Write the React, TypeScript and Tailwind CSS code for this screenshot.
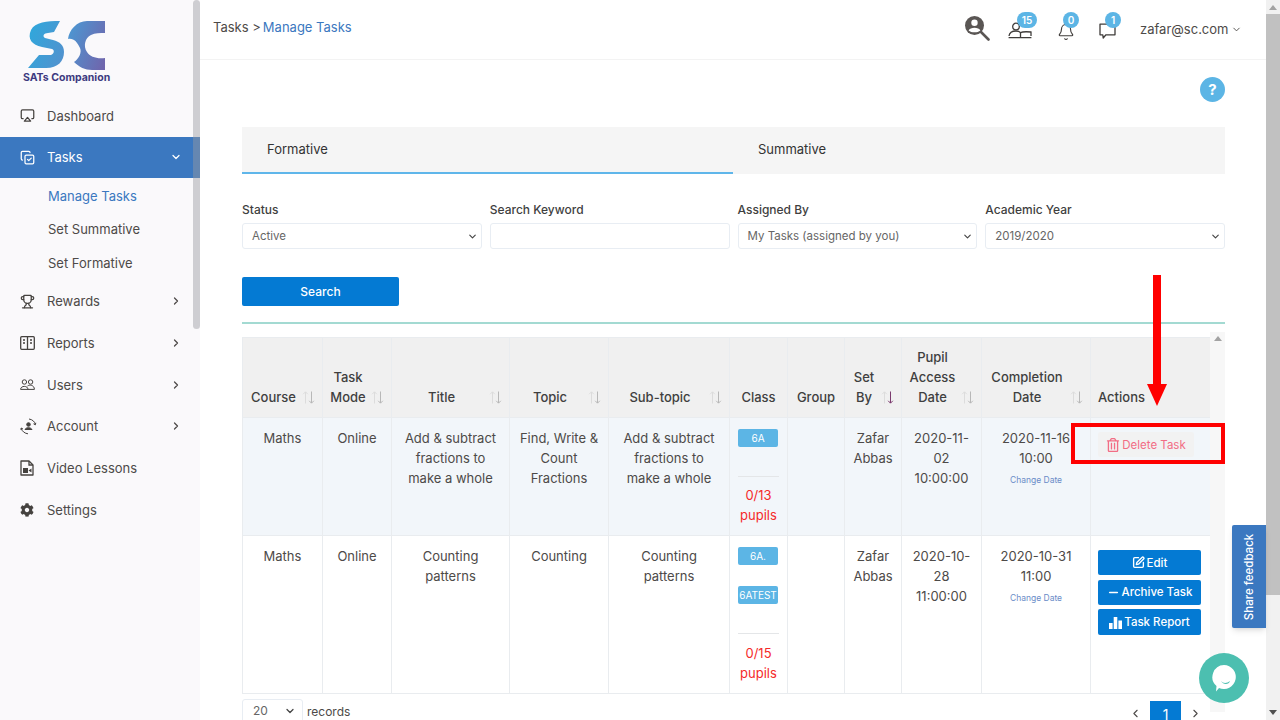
import React from 'react';
import { Airplay, Bell, ChevronDown, ChevronLeft, ChevronRight, CopyCheck, Minus, SquarePen, Trophy } from 'lucide-react';
import { FaCog, FaRegTrashAlt } from 'react-icons/fa';

const Logo = () => (
  <svg width="90" height="52" viewBox="0 0 90 52" className="block">
    <defs>
      <linearGradient id="sc" gradientUnits="userSpaceOnUse" x1="0" y1="10" x2="78" y2="40">
        <stop offset="0" stopColor="#2fa8dc" />
        <stop offset="0.5" stopColor="#4f93cf" />
        <stop offset="1" stopColor="#6f66ad" />
      </linearGradient>
    </defs>
    <path
      d="M33 0 C20 0 8 1 4 9 C0 18 5 24 15 26 L25 28 C28 29 27 33 24 34 L12 34 L1 47 L19 47 C31 47 37 40 37 31 C37 24 33 21 26 19 L18 17 C15 15 17 12 21 12 L27 11 Z"
      fill="url(#sc)"
    />
    <path
      d="M78 0 L60 0 C50 0 42 9 41 18 C47 17 50 21 53 27 C55 31 52 38 47 41 C52 46 58 49 65 49 L78 49 L78 37 C70 38 63 36 60 31 C56 25 58 17 64 14 C68 12 73 12 78 12 Z"
      fill="url(#sc)"
    />
  </svg>
);

const ReportIcon = () => (
  <svg width="15" height="14" viewBox="0 0 15 14" fill="none" stroke="#45423f" strokeWidth="1.3">
    <rect x="0.7" y="0.7" width="13.6" height="12.6" rx="1" />
    <path d="M7.5 1v12" />
    <path d="M3 4h2M3 7h2M10 4h2M10 7h2" strokeWidth="1.5" />
  </svg>
);

const UsersIcon = ({ w = 15, h = 11 }: { w?: number; h?: number }) => (
  <svg width={w} height={h} viewBox="0 0 15 11" fill="none" stroke="#45423f" strokeWidth="1">
    <circle cx="4.4" cy="3" r="2.2" />
    <circle cx="10.6" cy="3" r="2.2" />
    <path d="M0.6 10.4c0-4 7.4-4 7.4 0zM7.5 7c2-1.6 6.9-1 6.9 3.4H8" />
  </svg>
);

const AccountIcon = () => (
  <svg width="17" height="17" viewBox="0 0 17 17" fill="none" stroke="#45423f" strokeWidth="1">
    <circle cx="8.5" cy="6.5" r="1.8" fill="#45423f" />
    <path d="M5 11.5c1-2.3 5.5-2.6 7 0z" fill="#45423f" />
    <path d="M9 1c3.500.4 6 3 6.300 5.500M8 15.800C5 15.500 2 13.500 1.200 10.200" />
    <path d="M1 12l.2-2 1.800 1M15.800 4.800l-.5 2-1.800-1" />
  </svg>
);

const VideoDocIcon = () => (
  <svg width="14" height="16" viewBox="0 0 14 16" fill="none" stroke="#45423f" strokeWidth="1.300">
    <path d="M1 1h8l4 4v10H1z" strokeLinejoin="round" />
    <path d="M9 1v4h4" />
    <rect x="3" y="8" width="5" height="5" fill="#45423f" stroke="none" />
    <path d="M8.500 10.500l3-2v4z" fill="#45423f" stroke="none" />
  </svg>
);

const SearchUserIcon = () => (
  <svg width="26" height="26" viewBox="0 0 26 26" fill="none">
    <circle cx="10.500" cy="10.500" r="9.500" fill="#5a5654" />
    <circle cx="10.500" cy="7.700" r="3.200" fill="#fff" />
    <path d="M4.600 15.400c1.500-3.600 10.300-3.600 11.800 0-2.800 2.600-9 2.600-11.800 0z" fill="#fff" />
    <path d="M17 17l7.500 7.500" stroke="#5a5654" strokeWidth="2.600" strokeLinecap="round" />
  </svg>
);

const BookUserIcon = () => (
  <svg width="24" height="17" viewBox="0 0 24 17" fill="none" stroke="#3f3c3a" strokeWidth="1.300">
    <circle cx="8" cy="4.500" r="3.300" />
    <path d="M1 14c.5-3.600 3.500-5 7-5 2 0 3.600.6 4.500 1.600 1.600-.8 6-1 10.500-.6V14" />
    <path d="M0.600 15.600h22.800M12.500 10.600V15" />
  </svg>
);

const ChatIcon = () => (
  <svg width="17" height="16" viewBox="0 0 17 16" fill="none" stroke="#3f3c3a" strokeWidth="1.300">
    <path d="M1 1.200h15v10.600H7L4.200 15l-.4-3.200H1z" strokeLinejoin="round" />
  </svg>
);

const BarsIcon = () => (
  <svg width="13" height="13" viewBox="0 0 13 13" fill="currentColor">
    <rect x="0" y="7" width="3.600" height="6" />
    <rect x="4.700" y="1" width="3.600" height="12" />
    <rect x="9.400" y="4.500" width="3.600" height="8.500" />
  </svg>
);

const SortArrows = ({ active }: { active?: boolean }) => (
  <svg width="13" height="13" viewBox="0 0 13 13" fill="none" strokeWidth="1" className="absolute right-[7px] bottom-[13px]">
    <path d="M3.500 12.500V1M1.200 3.200l2.300-2.400 2.300 2.400" stroke="#dcdcdc" />
    <path d="M9.500 0.500V12M7.200 9.800l2.300 2.400 2.300-2.400" stroke={active ? '#7b3b6e' : '#b8b8b8'} />
  </svg>
);

const Badge = ({ children, w = 'w-[16px]', pos }: { children: React.ReactNode; w?: string; pos: string }) => (
  <span className={`absolute ${pos} ${w} h-[16px] rounded-full bg-[#5cb5e5] text-white text-[10px] font-semibold leading-[16px] text-center`}>
    {children}
  </span>
);

const NavItem = ({ icon, label, arrow }: { icon: React.ReactNode; label: string; arrow?: boolean }) => (
  <div className="h-[41.67px] flex items-center pl-[20px] pr-[18px] text-[#4d4a48]">
    <span className="w-[27px] flex items-center">{icon}</span>
    <span className="flex-1">{label}</span>
    {arrow && <ChevronRight size={12} strokeWidth={2.500} />}
  </div>
);

const Field = ({ label, children }: { label: string; children: React.ReactNode }) => (
  <div>
    <div className="text-[12px] font-medium text-[#3f3f3f] leading-[16px] mb-[5px]">{label}</div>
    {children}
  </div>
);

const Select = ({ value }: { value: string }) => (
  <div className="h-[26px] rounded-[3px] border border-[#e8edf3] bg-white pl-[9px] pr-[3px] flex items-center justify-between text-[11.5px] text-[#666]">
    <span>{value}</span>
    <ChevronDown size={11} strokeWidth={2.500} className="text-[#444]" />
  </div>
);

const thClass = 'relative border border-[#e9ecef] pl-[7px] pr-[25px] pt-[9px] pb-[10px] font-medium text-[#3f3f3f] align-bottom text-center';
const thPlain = 'border border-[#e9ecef] pt-[9px] pb-[10px] font-medium text-[#3f3f3f] align-bottom text-center';
const tdClass = 'border border-[#e9ecef] px-[8px] py-[10px] align-top text-center text-[#4d4a48]';
const actionTd = 'border border-[#e9ecef] px-[7px] py-[10px] align-top text-[#4d4a48]';

const classBadge = 'mr-auto h-[18px] w-[40px] rounded-[2px] bg-[#5cb5e5] text-white text-[10px] leading-[18px] text-center';

const Pupils = ({ value }: { value: string }) => (
  <div className="text-[#f52a2a]">
    {value}
    <br />
    pupils
  </div>
);

const ChangeDate = () => <div className="text-[8.500px] leading-[12px] mt-[6px] text-[#6a8cc8]">Change Date</div>;

const ActionButton = ({ icon, label, h }: { icon: React.ReactNode; label: string; h: string }) => (
  <div className={`${h} w-[103px] rounded-[2px] bg-[#047ad3] text-white text-[11.500px] font-medium flex items-center justify-center gap-[2px]`}>
    {icon}
    {label}
  </div>
);

export default function App() {
  return (
    <div className="relative flex h-[720px] w-[1280px] overflow-hidden bg-white text-[13px] leading-[20px] font-['Inter',sans-serif]">
      {/* sidebar */}
      <aside className="relative w-[200px] shrink-0 bg-[#faf9fb]">
        <div className="h-[95px] pl-[23px] pt-[21px]">
          <div className="ml-[4px]">
            <Logo />
          </div>
          <div className="text-[10.500px] leading-[12px] font-bold text-[#3d3a80] -mt-[1px] whitespace-nowrap">SATs Companion</div>
        </div>
        <NavItem icon={<Airplay size={15} color="#45423f" />} label="Dashboard" />
        <div className="h-[41px] flex items-center pl-[20px] pr-[18px] bg-[#3b78c0] text-white">
          <span className="w-[27px] flex items-center">
            <CopyCheck size={15} />
          </span>
          <span className="flex-1">Tasks</span>
          <ChevronDown size={12} strokeWidth={2.500} />
        </div>
        <div className="pl-[48px] text-[#4d4a48]">
          <div className="h-[35px] pt-[1px] flex items-center text-[#3b78c0]">Manage Tasks</div>
          <div className="h-[33px] flex items-center">Set Summative</div>
          <div className="h-[35px] pb-[1px] flex items-center">Set Formative</div>
        </div>
        <NavItem icon={<Trophy size={15} color="#45423f" />} label="Rewards" arrow />
        <NavItem icon={<ReportIcon />} label="Reports" arrow />
        <NavItem icon={<UsersIcon />} label="Users" arrow />
        <NavItem icon={<AccountIcon />} label="Account" arrow />
        <NavItem icon={<VideoDocIcon />} label="Video Lessons" />
        <NavItem icon={<FaCog size={14} color="#45423f" />} label="Settings" />
        <div className="absolute right-0 top-0 h-[329px] w-[7px] rounded-[4px] bg-[#9899a0]/45" />
      </aside>

      {/* main */}
      <main className="flex-1 min-w-0">
        <header className="h-[60px] border-b border-[#f3f3f3] flex items-center pl-[13px] pr-[30px]">
          <div className="flex-1 -mt-[5px] text-[#4d4a48]">
            Tasks &gt;<span className="ml-[2px] text-[#3b78c0]">Manage Tasks</span>
          </div>
          <div className="relative flex items-center text-[#4d4a48] h-full w-[272px]">
            <span className="absolute left-0 top-[15px]"><SearchUserIcon /></span>
            <span className="absolute left-[44px] top-[22px]"><BookUserIcon /></span>
            <Badge pos="left-[53px] top-[12px]" w="w-[20px]">15</Badge>
            <span className="absolute left-[93px] top-[23px]"><Bell size={18} strokeWidth={1.500} color="#3f3c3a" /></span>
            <Badge pos="left-[99px] top-[12px]">0</Badge>
            <span className="absolute left-[135px] top-[23px]"><ChatIcon /></span>
            <Badge pos="left-[141px] top-[12px]">1</Badge>
            <span className="absolute left-[176px] top-[19px]">zafar@sc.com</span>
            <ChevronDown size={11} strokeWidth={2} className="absolute left-[267px] top-[24px]" />
          </div>
        </header>

        <div className="pl-[42px] pr-[41px]">
          <div className="flex justify-end h-[67px] pt-[17px]">
            <div className="h-[25px] w-[25px] rounded-full bg-[#5cb5e5] text-white font-bold text-[15px] leading-[25px] text-center">?</div>
          </div>

          <div className="flex h-[47px] bg-[#f5f5f5] text-[#333]">
            <div className="w-[491px] pl-[25px] pt-[12px] border-b-2 border-[#5fb6ea]">Formative</div>
            <div className="pl-[25px] pt-[12px]">Summative</div>
          </div>

          <div className="grid grid-cols-4 gap-x-[8px] mt-[28px]">
            <Field label="Status"><Select value="Active" /></Field>
            <Field label="Search Keyword"><div className="h-[26px] rounded-[3px] border border-[#e8edf3] bg-white" /></Field>
            <Field label="Assigned By"><Select value="My Tasks (assigned by you)" /></Field>
            <Field label="Academic Year"><Select value="2019/2020" /></Field>
          </div>

          <div className="mt-[28px] h-[29px] w-[157px] rounded-[2px] bg-[#047ad3] text-white text-[12px] font-medium flex items-center justify-center">Search</div>

          <div className="mt-[16px] h-[2px] bg-[#a3dad2]" />

          <div className="mt-[8px] flex">
            <div className="flex-1 min-w-0 pt-[5px]">
              <table className="w-[968px] table-fixed border-collapse">
                <colgroup>
                  <col className="w-[80px]" />
                  <col className="w-[69px]" />
                  <col className="w-[118px]" />
                  <col className="w-[99px]" />
                  <col className="w-[121px]" />
                  <col className="w-[58px]" />
                  <col className="w-[57px]" />
                  <col className="w-[57px]" />
                  <col className="w-[80px]" />
                  <col className="w-[109px]" />
                  <col className="w-[120px]" />
                </colgroup>
                <thead className="bg-[#f0f0f0]">
                  <tr className="h-[79px]">
                    <th className={thClass}>Course<SortArrows /></th>
                    <th className={thClass}>Task Mode<SortArrows /></th>
                    <th className={thClass}>Title<SortArrows /></th>
                    <th className={thClass}>Topic<SortArrows /></th>
                    <th className={thClass}>Sub-topic<SortArrows /></th>
                    <th className={thPlain}>Class</th>
                    <th className={thPlain}>Group</th>
                    <th className={thClass}>Set By<SortArrows active /></th>
                    <th className={thClass}>Pupil Access Date<SortArrows /></th>
                    <th className={thClass}>Completion Date<SortArrows /></th>
                    <th className="border border-[#e9ecef] px-[7px] pt-[9px] pb-[10px] font-medium text-[#3f3f3f] align-bottom text-left">Actions</th>
                  </tr>
                </thead>
                <tbody>
                  <tr className="h-[118px] bg-[#f2f6fa]">
                    <td className={tdClass}>Maths</td>
                    <td className={tdClass}>Online</td>
                    <td className={tdClass}>Add &amp; subtract fractions to make a whole</td>
                    <td className={tdClass}>Find, Write &amp; Count Fractions</td>
                    <td className={tdClass}>Add &amp; subtract fractions to make a whole</td>
                    <td className={tdClass}>
                      <div className={`${classBadge} mt-[1px]`}>6A</div>
                      <div className="h-px bg-[#e4e6e8] mt-[29px] mb-[8px]" />
                      <Pupils value="0/13" />
                    </td>
                    <td className={tdClass} />
                    <td className={tdClass}>Zafar Abbas</td>
                    <td className={tdClass}>2020-11-02 10:00:00</td>
                    <td className={tdClass}>
                      <div>2020-11-16 10:00</div>
                      <ChangeDate />
                    </td>
                    <td className={actionTd}>
                      <div className="mt-[4px] h-[25px] w-[96px] bg-[#f2f2f2] rounded-[2px] text-[#f26d85] text-[11.500px] flex items-center justify-center gap-[2px]">
                        <FaRegTrashAlt size={14} />
                        Delete Task
                      </div>
                    </td>
                  </tr>
                  <tr className="h-[157px]">
                    <td className={tdClass}>Maths</td>
                    <td className={tdClass}>Online</td>
                    <td className={tdClass}>Counting patterns</td>
                    <td className={tdClass}>Counting</td>
                    <td className={tdClass}>Counting patterns</td>
                    <td className={tdClass}>
                      <div className={`${classBadge} mt-[1px]`}>6A.</div>
                      <div className={`${classBadge} mt-[21px] text-[9.500px]`}>6ATEST</div>
                      <div className="h-px bg-[#e4e6e8] mt-[29px] mb-[9px]" />
                      <Pupils value="0/15" />
                    </td>
                    <td className={tdClass} />
                    <td className={tdClass}>Zafar Abbas</td>
                    <td className={tdClass}>2020-10-28 11:00:00</td>
                    <td className={tdClass}>
                      <div>2020-10-31 11:00</div>
                      <ChangeDate />
                    </td>
                    <td className={actionTd}>
                      <div className="flex flex-col gap-[4.500px] pt-[4px]">
                        <ActionButton h="h-[25px]" icon={<SquarePen size={13} strokeWidth={2.500} />} label="Edit" />
                        <ActionButton h="h-[25px]" icon={<Minus size={13} strokeWidth={3} />} label="Archive Task" />
                        <ActionButton h="h-[26px]" icon={<BarsIcon />} label="Task Report" />
                      </div>
                    </td>
                  </tr>
                </tbody>
              </table>

              <div className="flex items-start mt-[5px] text-[#4d4a48] text-[12px]">
                <div className="h-[24px] w-[61px] rounded-[3px] border border-[#e8edf3] pl-[10px] pr-[6px] flex items-center justify-between text-[#666]">
                  <span>20</span>
                  <ChevronDown size={12} strokeWidth={2.500} className="text-[#444]" />
                </div>
                <span className="ml-[4px] mt-[3px]">records</span>
                <div className="ml-auto mr-[8px] flex items-center gap-[8px] mt-[2px]">
                  <ChevronLeft size={13} />
                  <div className="h-[24px] w-[31px] bg-[#047ad3] text-white text-center text-[14px] leading-[28px]">1</div>
                  <ChevronRight size={13} />
                </div>
              </div>
            </div>

            {/* table scrollbar */}
            <div className="w-[15px] h-[380px] bg-[#f7f7f7] flex justify-center pt-[4px]">
              <div className="w-0 h-0 border-x-[4px] border-x-transparent border-b-[5px] border-b-[#a3a3a3]" />
            </div>
          </div>
        </div>
      </main>

      {/* page scrollbar */}
      <div className="w-[14px] shrink-0 bg-[#f1f1f1] flex flex-col items-center pt-[5px] pb-[5px]">
        <div className="w-0 h-0 border-x-[4px] border-x-transparent border-b-[5px] border-b-[#a3a3a3]" />
        <div className="w-full h-[581px] mt-[4px] mb-auto bg-[#c1c1c1]" />
        <div className="w-0 h-0 border-x-[4px] border-x-transparent border-t-[5px] border-t-[#505050]" />
      </div>

      {/* floating things */}
      <div className="absolute left-[1232px] top-[525px] h-[103px] w-[34px] bg-[#3b78c0] rounded-l-[2px] shadow-md flex items-center justify-center">
        <span className="-rotate-90 whitespace-nowrap text-white text-[11.500px] font-medium">Share feedback</span>
      </div>
      <div className="absolute left-[1199px] top-[653px] h-[50px] w-[50px] rounded-full bg-[#4cbfb0] flex items-center justify-center">
        <svg width="26" height="28" viewBox="0 0 26 28">
          <path d="M13 1a12 12 0 1 1-5 23l-3 3.500 .5-5.500A12 12 0 0 1 13 1z" fill="#fff" />
          <path d="M10 17c2 2.500 6 2.500 9 0-1 4-7 4-9 0z" fill="#4cbfb0" />
        </svg>
      </div>

      {/* red annotation */}
      <div className="absolute left-[1071px] top-[423px] h-[41px] w-[154px] border-4 border-[#f00]" />
      <div className="absolute left-[1147px] top-[275px] flex flex-col items-center">
        <div className="w-[8px] h-[109px] bg-[#f00]" />
        <div className="w-0 h-0 border-x-[10.500px] border-x-transparent border-t-[22px] border-t-[#f00]" />
      </div>
    </div>
  );
}
